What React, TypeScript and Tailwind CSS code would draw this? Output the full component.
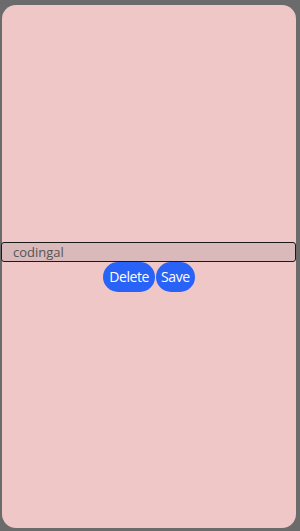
import React from "react";

export default function App() {
  return (
    <div className="w-[300px] h-[531px] bg-[#6b6b6b] pt-[5px] pl-[2px] pr-[4px] pb-[3px] font-['Open_Sans',sans-serif]">
      <div className="h-full w-full bg-[#efc7c6] rounded-[14px] flex flex-col items-center justify-center">
        <input
          defaultValue="codingal"
          className="w-[calc(100%+1px)] -ml-px h-[20px] bg-[#d9b9b9] border border-[#1a1a1a] rounded-[3px] pl-[11px] text-[13px] text-[#555] outline-none leading-none"
        />
        <div className="flex gap-px">
          <button className="h-[30px] px-[6px] rounded-full bg-[#2962f7] text-white text-[14px] tracking-[-0.4px]">
            Delete
          </button>
          <button className="h-[30px] px-[5px] rounded-full bg-[#2962f7] text-white text-[14px] tracking-[-0.4px]">
            Save
          </button>
        </div>
      </div>
    </div>
  );
}
